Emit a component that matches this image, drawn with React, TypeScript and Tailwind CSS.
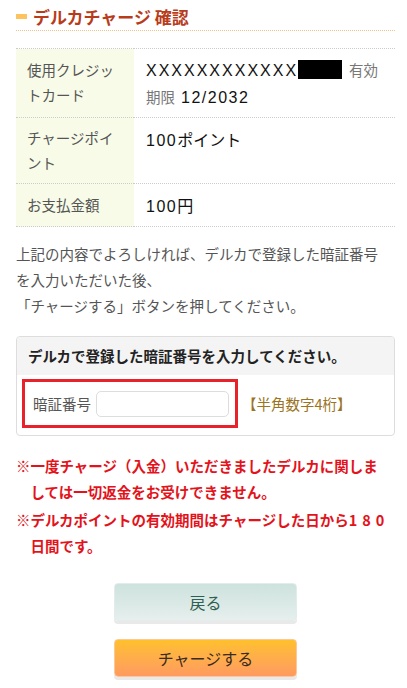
export default function App() {
  return (
    <div className="min-h-screen bg-white pl-4 pr-3 font-['Noto_Sans_CJK_JP','Liberation_Sans',sans-serif] text-[14.5px] text-[#555]">
      {/* Title */}
      <h1 className="flex h-[31px] items-center gap-[6px] border-b border-dotted border-[#f0c48a] pt-[3px] text-[17px] font-bold text-[#b83c1c]">
        <span className="h-[5px] w-[11px] bg-[#fcc35e]" />
        デルカチャージ 確認
      </h1>

      {/* Summary table */}
      <table className="mt-[17px] w-full border-collapse border-t border-dotted border-[#cccccc]">
        <tbody>
          <tr className="border-b border-dotted border-[#cccccc]">
            <th className="w-[118px] bg-[#f7fbe8] px-[11px] py-[8px] text-left align-top font-normal leading-[25px] text-[#555]">
              使用クレジットカード
            </th>
            <td className="py-[7px] pl-[12px] pr-[8px] align-top text-[16px] text-[#111]">
              <div className="h-[27px] overflow-hidden whitespace-nowrap leading-[27px]">
                <span className="font-['Liberation_Sans'] leading-none tracking-[2px]">XXXXXXXXXXXX</span>
                <span className="inline-block h-[19px] w-[44px] bg-black align-[-3px]" />
                <span className="ml-[7px] text-[14.5px] leading-none text-[#777]">有効</span>
              </div>
              <div className="h-[27px] overflow-hidden whitespace-nowrap leading-[27px]">
                <span className="text-[14.5px] leading-none text-[#777]">期限</span>
                <span className="ml-[6px] font-['Liberation_Sans'] leading-none tracking-[1.5px]">12/2032</span>
              </div>
            </td>
          </tr>
          <tr className="border-b border-dotted border-[#cccccc]">
            <th className="bg-[#f7fbe8] px-[11px] py-[8px] text-left align-top font-normal leading-[24.5px] text-[#555]">
              チャージポイント
            </th>
            <td className="py-[8px] pl-[12px] pr-[8px] align-top text-[16px] text-[#111]">
              <div className="h-[27px] leading-[27px]">
                <span className="font-['Liberation_Sans'] leading-none tracking-[1.5px]">100</span>ポイント
              </div>
            </td>
          </tr>
          <tr className="border-b border-dotted border-[#cccccc]">
            <th className="bg-[#f7fbe8] px-[11px] py-[8px] text-left align-top font-normal leading-[25px] text-[#555]">
              お支払金額
            </th>
            <td className="py-[8px] pl-[12px] pr-[8px] align-top text-[16px] text-[#111]">
              <div className="h-[26px] leading-[26px]">
                <span className="font-['Liberation_Sans'] leading-none tracking-[1.5px]">100</span>円
              </div>
            </td>
          </tr>
        </tbody>
      </table>

      <p className="mt-[14px] leading-[26px]">
        上記の内容でよろしければ、デルカで登録した暗証番号
        <br />
        を入力いただいた後、
        <br />
        「チャージする」ボタンを押してください。
      </p>

      {/* PIN box */}
      <div className="mt-[17px] overflow-hidden rounded-[4px] border border-[#dddddd]">
        <div className="flex h-[38px] items-center bg-[#f4f4f4] px-[11px] font-bold text-[#222]">
          デルカで登録した暗証番号を入力してください。
        </div>
        <div className="flex items-center pb-[7px] pl-[5px] pt-[4px]">
          <div className="flex h-[49px] items-center border-[3px] border-[#e8212b] pl-[8px] pr-[6px]">
            <span>暗証番号</span>
            <input
              type="password"
              inputMode="numeric"
              maxLength={4}
              className="ml-[5px] h-[26px] w-[133px] rounded-[5px] border border-[#dddddd] bg-white px-2 outline-none"
            />
          </div>
          <span className="ml-[4px] text-[#9b7422]">【半角数字4桁】</span>
        </div>
      </div>

      {/* Notes */}
      <ul className="mt-[17px] font-bold leading-[26px] text-[#e3131b]">
        <li className="pl-[1em] indent-[-1em]">
          ※一度チャージ（入金）いただきましたデルカに関しま
          <br />
          しては一切返金をお受けできません。
        </li>
        <li className="mt-[2px] pl-[1em] indent-[-1em]">
          ※デルカポイントの有効期間はチャージした日から<span className="tracking-[5px]">180</span>
          <br />
          日間です。
        </li>
      </ul>

      {/* Buttons */}
      <div className="flex flex-col items-center pb-[10px] pt-[24px]">
        <button className="h-[38px] w-[183px] rounded-[4px] border border-[#e2ecea] bg-linear-to-b from-[#cde2de] to-[#e6efed] text-[16px] text-[#2f5e52] shadow-[0_3px_0_#e9e9e9]">
          戻る
        </button>
        <button className="mt-[18px] h-[38px] w-[183px] rounded-[4px] border border-[#fcc89a] bg-linear-to-b from-[#ffc02a] to-[#ff9a5e] text-[16px] text-[#3a2b1f] shadow-[0_3px_0_#e9e9e9]">
          チャージする
        </button>
      </div>
    </div>
  );
}
